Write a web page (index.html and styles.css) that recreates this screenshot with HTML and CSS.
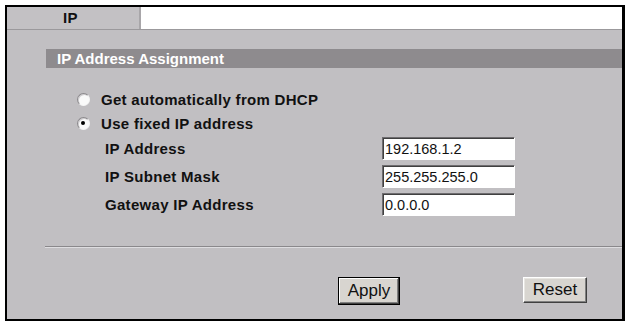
FILE: index.html
```html
<!DOCTYPE html>
<html lang="en">
<head>
    <meta charset="UTF-8">
    <title>IP</title>
    <link rel="stylesheet" href="styles.css">
</head>
<body>
    <div class="frame">
        <div class="tabs">
            <div class="tab">IP</div>
            <div class="tab-rest"></div>
        </div>
        <div class="content">
            <div class="section-title">IP Address Assignment</div>

            <div class="options">
                <label class="option"><span class="radio"></span>Get automatically from DHCP</label>
                <label class="option"><span class="radio checked"></span>Use fixed IP address</label>
            </div>

            <div class="fields">
                <div class="field">
                    <span class="field-label">IP Address</span>
                    <input class="field-input" type="text" value="192.168.1.2">
                </div>
                <div class="field">
                    <span class="field-label">IP Subnet Mask</span>
                    <input class="field-input" type="text" value="255.255.255.0">
                </div>
                <div class="field">
                    <span class="field-label">Gateway IP Address</span>
                    <input class="field-input" type="text" value="0.0.0.0">
                </div>
            </div>

            <div class="divider"></div>

            <div class="actions">
                <button class="btn btn-default">Apply</button>
                <button class="btn btn-reset">Reset</button>
            </div>
        </div>
    </div>
</body>
</html>
```

FILE: styles.css
```css
body {
    margin: 0;
    background: #fff;
    font-family: "Liberation Sans", Arial, sans-serif;
}
.frame {
    margin: 5px 0 0 5px;
    width: 620px;
    height: 316px;
    border: 2px solid #000;
    border-right-width: 3px;
    box-sizing: border-box;
    display: flex;
    flex-direction: column;
    background: #c1bfc2;
}
.tabs {
    display: flex;
    height: 22px;
    border-bottom: 1px solid #9b999c;
}
.tab {
    width: 134px;
    padding-left: 56px;
    box-sizing: border-box;
    background: #c3c1c4;
    border-right: 2px solid #a8a6a9;
    font-weight: bold;
    font-size: 15px;
    letter-spacing: 0.3px;
    line-height: 21px;
    color: #111;
}
.tab-rest {
    flex: 1;
    background: #fff;
}
.content {
    flex: 1;
    padding-top: 19px;
}
.section-title {
    margin-left: 39px;
    height: 19px;
    line-height: 19px;
    padding-left: 11px;
    background: #8e8b8e;
    color: #fff;
    font-weight: bold;
    font-size: 15px;
}
.options {
    margin-top: 19px;
    padding-left: 70px;
}
.option {
    display: flex;
    align-items: center;
    gap: 11px;
    height: 24px;
    font-weight: bold;
    font-size: 15px;
    letter-spacing: 0.3px;
    color: #111;
}
.radio {
    width: 13px;
    height: 13px;
    border-radius: 50%;
    box-sizing: border-box;
    background: #fafafa;
    border: 1px solid;
    border-color: #8a888b #f4f4f4 #f4f4f4 #8a888b;
    box-shadow: inset 1px 1px 0 #cfcdd0;
    position: relative;
}
.radio.checked::after {
    content: "";
    position: absolute;
    left: 3px;
    top: 3px;
    width: 4px;
    height: 4px;
    border-radius: 50%;
    background: #000;
}
.fields {
    margin-top: 2px;
    padding-left: 98px;
    display: flex;
    flex-direction: column;
    gap: 5px;
}
.field {
    display: flex;
    align-items: center;
}
.field-label {
    width: 277px;
    font-weight: bold;
    font-size: 15px;
    letter-spacing: 0.3px;
    color: #111;
}
.field-input {
    width: 133px;
    height: 23px;
    box-sizing: border-box;
    margin: 0;
    padding: 1px 2px 0;
    border: 1px solid;
    border-color: #6e6c6f #fff #fff #6e6c6f;
    box-shadow: inset 1px 1px 0 #404040;
    background: #fff;
    font-family: "Liberation Sans", Arial, sans-serif;
    font-size: 14.5px;
    color: #111;
    outline: none;
}
.divider {
    margin: 30px 0 0 38px;
    height: 1px;
    border-top: 1px solid #8a888b;
    background: #dedde0;
}
.actions {
    margin-top: 29px;
    padding-left: 331px;
    display: flex;
    align-items: flex-start;
    gap: 123px;
}
.btn {
    margin: 0;
    padding: 0;
    background: #d8d5d0;
    font-family: "Liberation Sans", Arial, sans-serif;
    font-size: 17px;
    color: #111;
    border: 1px solid;
    border-color: #fff #404040 #404040 #fff;
    box-shadow: inset -1px -1px 0 #808080, inset 1px 1px 0 #e8e6e2;
}
.btn-default {
    width: 62px;
    height: 28px;
    border-color: #000;
    box-shadow: inset -1px -1px 0 #404040, inset 1px 1px 0 #fff, inset -2px -2px 0 #808080;
}
.btn-reset {
    width: 64px;
    height: 26px;
}
```
